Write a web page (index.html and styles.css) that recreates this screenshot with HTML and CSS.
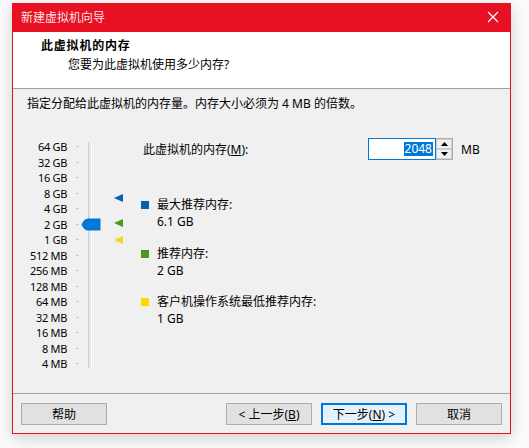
FILE: index.html
```html
<!DOCTYPE html>
<html lang="zh-CN">
<head>
<meta charset="utf-8">
<title>新建虚拟机向导</title>
<link rel="stylesheet" href="styles.css">
</head>
<body>
<div class="window">
  <div class="titlebar">
    <span class="title">新建虚拟机向导</span>
    <svg class="close" width="12" height="12" viewBox="0 0 12 12"><path d="M1 1 L11 11 M11 1 L1 11" stroke="#fff" stroke-width="1.2" fill="none"/></svg>
  </div>
  <div class="header">
    <div class="h-title">此虚拟机的内存</div>
    <div class="h-sub">您要为此虚拟机使用多少内存?</div>
  </div>
  <div class="body">
    <div class="desc">指定分配给此虚拟机的内存量。内存大小必须为 4 MB 的倍数。</div>
    <div class="main">
      <div class="slider">
        <div class="scale">
          <div class="row"><span class="lbl">64 GB</span><i class="tick"></i></div>
          <div class="row"><span class="lbl">32 GB</span><i class="tick"></i></div>
          <div class="row"><span class="lbl">16 GB</span><i class="tick"></i></div>
          <div class="row"><span class="lbl">8 GB</span><i class="tick"></i></div>
          <div class="row"><span class="lbl">4 GB</span><i class="tick"></i></div>
          <div class="row"><span class="lbl">2 GB</span><i class="tick"></i></div>
          <div class="row"><span class="lbl">1 GB</span><i class="tick"></i></div>
          <div class="row"><span class="lbl">512 MB</span><i class="tick"></i></div>
          <div class="row"><span class="lbl">256 MB</span><i class="tick"></i></div>
          <div class="row"><span class="lbl">128 MB</span><i class="tick"></i></div>
          <div class="row"><span class="lbl">64 MB</span><i class="tick"></i></div>
          <div class="row"><span class="lbl">32 MB</span><i class="tick"></i></div>
          <div class="row"><span class="lbl">16 MB</span><i class="tick"></i></div>
          <div class="row"><span class="lbl">8 MB</span><i class="tick"></i></div>
          <div class="row"><span class="lbl">4 MB</span><i class="tick"></i></div>
        </div>
        <div class="track"></div>
        <svg class="thumb" width="20" height="13" viewBox="0 0 20 13"><path d="M7 0.5 H19.5 V12.5 H7 Q3 12.5 0.5 6.5 Q3 0.5 7 0.5 Z" fill="#0078d7"/></svg>
        <svg class="mark mark-max" width="9" height="8" viewBox="0 0 9 8"><path d="M0 4 L9 0 L9 8 Z" fill="#005fb8"/></svg>
        <svg class="mark mark-rec" width="9" height="8" viewBox="0 0 9 8"><path d="M0 4 L9 0 L9 8 Z" fill="#4a9a1c"/></svg>
        <svg class="mark mark-min" width="9" height="8" viewBox="0 0 9 8"><path d="M0 4 L9 0 L9 8 Z" fill="#f2d81c"/></svg>
      </div>
      <div class="content">
        <div class="mem-row">
          <span class="mem-label">此虚拟机的内存(<u>M</u>):</span>
          <div class="spin">
            <div class="field"><span class="sel">2048</span></div>
            <div class="arrows">
              <div class="arrow"><svg width="7" height="4" viewBox="0 0 7 4"><path d="M0 4 L3.5 0 L7 4 Z" fill="#000"/></svg></div>
              <div class="arrow"><svg width="7" height="4" viewBox="0 0 7 4"><path d="M0 0 L3.5 4 L7 0 Z" fill="#000"/></svg></div>
            </div>
          </div>
          <span class="unit">MB</span>
        </div>
        <div class="legend l-max">
          <i class="sq sq-blue"></i>
          <div><div>最大推荐内存:</div><div>6.1 GB</div></div>
        </div>
        <div class="legend l-rec">
          <i class="sq sq-green"></i>
          <div><div>推荐内存:</div><div>2 GB</div></div>
        </div>
        <div class="legend l-min">
          <i class="sq sq-yellow"></i>
          <div><div>客户机操作系统最低推荐内存:</div><div>1 GB</div></div>
        </div>
      </div>
    </div>
    <div class="footer">
      <button class="btn">帮助</button>
      <div class="spacer"></div>
      <button class="btn">&lt; 上一步(<u>B</u>)</button>
      <button class="btn focus">下一步(<u>N</u>) &gt;</button>
      <button class="btn">取消</button>
    </div>
  </div>
</div>
</body>
</html>
```
FILE: styles.css
```css
* { box-sizing: border-box; }
html, body { margin: 0; padding: 0; }
body {
  width: 529px;
  height: 448px;
  background: #fbfbfb;
  font-family: "Noto Sans", "Noto Sans CJK SC", sans-serif;
  font-size: 12px;
  color: #000;
  overflow: hidden;
}
.window {
  margin: 3px 0 0 12px;
  width: 499px;
  height: 431px;
  border: 1px solid #e81123;
  border-top: 0;
  background: #f0f0f0;
  box-shadow: 0 4px 14px rgba(0,0,0,0.18);
  display: flex;
  flex-direction: column;
}
.titlebar {
  height: 29px;
  margin: 0 -1px;
  background: #e81123;
  color: rgba(255,255,255,0.9);
  display: flex;
  align-items: center;
  padding: 0 12px 0 9px;
  justify-content: space-between;
}
.title { font-size: 12px; line-height: 16px; }
.close { margin-top: -2px; }
.header {
  height: 57px;
  background: #fff;
  border-bottom: 1px solid #a0a0a0;
  padding: 6px 0 0 28px;
}
.h-title { font-weight: bold; line-height: 16px; letter-spacing: 0.8px; }
.h-sub { line-height: 16px; margin-top: 3px; padding-left: 27px; }
.body {
  flex: 1;
  display: flex;
  flex-direction: column;
}
.desc { padding: 7px 0 0 14px; line-height: 16px; }
.main {
  height: 281px;
  display: flex;
}
.slider {
  position: relative;
  width: 130px;
  padding-top: 27px;
}
.scale { display: flex; flex-direction: column; }
.row {
  height: 15.5px;
  display: flex;
  align-items: center;
}
.lbl {
  width: 54px;
  text-align: right;
  font-size: 11px;
  line-height: 15px;
  letter-spacing: -0.3px;
}
.tick {
  width: 3px;
  height: 1px;
  background: #c8c8c8;
  margin-left: 9px;
}
.track {
  position: absolute;
  left: 75px;
  top: 30px;
  width: 4px;
  height: 226px;
  background: #e6e6e6;
  border-left: 1px solid #d0d0d0;
  border-right: 1px solid #fff;
}
.thumb { position: absolute; left: 68px; top: 106px; }
.mark { position: absolute; left: 101px; }
.mark-max { top: 82px; }
.mark-rec { top: 107px; }
.mark-min { top: 124px; }
.content {
  flex: 1;
  padding: 26px 0 0 0;
}
.mem-row {
  display: flex;
  align-items: center;
  height: 22px;
}
.mem-label { width: 225px; }
.spin { display: flex; height: 22px; }
.field {
  width: 68px;
  height: 22px;
  background: #fff;
  border: 1px solid #0078d7;
  display: flex;
  align-items: center;
  justify-content: flex-end;
  padding-right: 2px;
}
.sel {
  background: #0078d7;
  color: #fff;
  line-height: 14px;
  padding: 0 1px;
}
.arrows {
  width: 17px;
  display: flex;
  flex-direction: column;
  border: 1px solid #adadad;
  border-left: 0;
}
.arrow {
  flex: 1;
  display: flex;
  align-items: center;
  justify-content: center;
  background: #f0f0f0;
  border: 1px solid #cfcfcf;
}
.unit { margin-left: 8px; }
.legend {
  display: flex;
  line-height: 17px;
  margin-left: -2px;
}
.legend .sq {
  width: 8px;
  height: 8px;
  margin: 5px 8px 0 0;
}
.l-max { margin-top: 36px; }
.l-rec { margin-top: 15px; }
.l-min { margin-top: 14px; }
.sq-blue { background: #0063b1; }
.sq-green { background: #4a9a1c; }
.sq-yellow { background: #ffd800; }
.footer {
  border-top: 1px solid #a0a0a0;
  display: flex;
  padding: 9px 8px 0 8px;
  height: 40px;
}
.spacer { flex: 1; }
.btn {
  width: 86px;
  height: 22px;
  background: #e1e1e1;
  border: 1px solid #adadad;
  font-family: inherit;
  font-size: 12px;
  color: #000;
  padding: 0;
  margin-left: 9px;
}
.btn:first-child { margin-left: 0; }
.btn.focus { border: 2px solid #0078d7; background: #e5f1fb; }
u { text-decoration: underline; }
```
